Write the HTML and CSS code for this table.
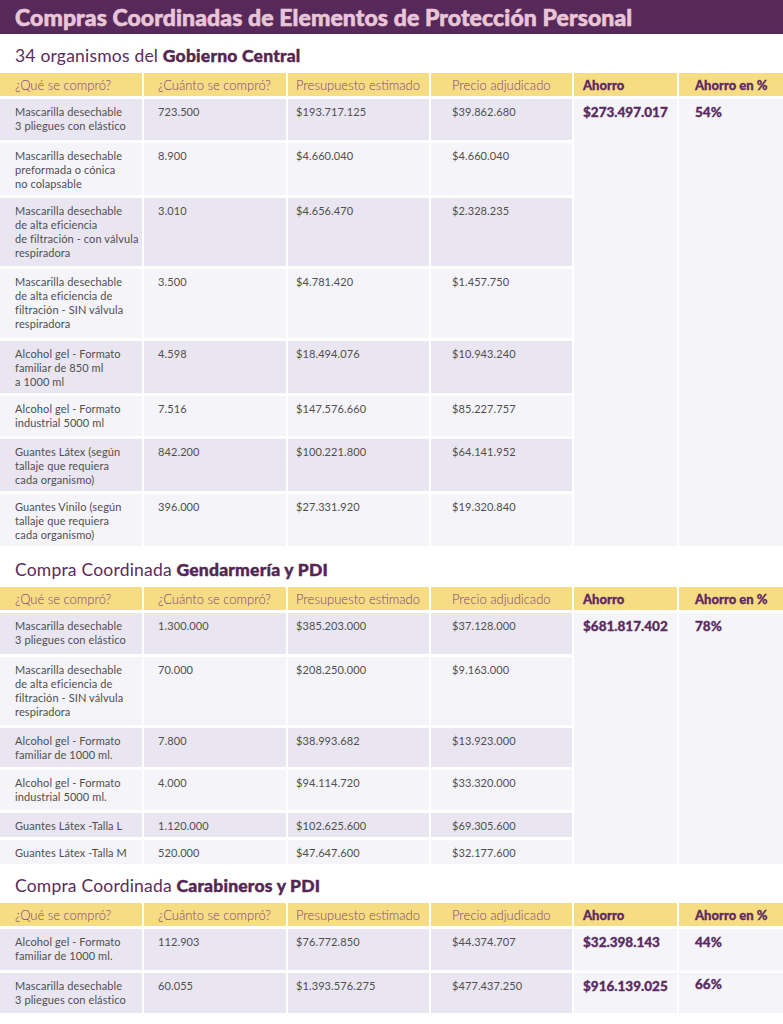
FILE: index.html
```html
<!DOCTYPE html>
<html lang="es">
<head>
<meta charset="utf-8">
<title>Compras Coordinadas de Elementos de Protección Personal</title>
<link rel="stylesheet" href="styles.css">
</head>
<body>
<header class="banner">
  <h1 class="banner-title">Compras Coordinadas de Elementos de Protección Personal</h1>
</header>

<section class="block">
  <h2 class="subtitle">34 organismos del <b>Gobierno Central</b></h2>
  <div class="grid g1">
    <div class="hd c1">¿Qué se compró?</div>
    <div class="hd c2">¿Cuánto se compró?</div>
    <div class="hd c3">Presupuesto estimado</div>
    <div class="hd c4">Precio adjudicado</div>
    <div class="hd hd-strong c5">Ahorro</div>
    <div class="hd hd-strong c6">Ahorro en %</div>
    <div class="sum c5 span">$273.497.017</div>
    <div class="sum c6 span pct">54%</div>

    <div class="cell lav c1">Mascarilla desechable<br>3 pliegues con elástico</div>
    <div class="cell lav c2">723.500</div>
    <div class="cell lav c3">$193.717.125</div>
    <div class="cell lav c4">$39.862.680</div>

    <div class="cell c1">Mascarilla desechable<br>preformada o cónica<br>no colapsable</div>
    <div class="cell c2">8.900</div>
    <div class="cell c3">$4.660.040</div>
    <div class="cell c4">$4.660.040</div>

    <div class="cell lav c1">Mascarilla desechable<br>de alta eficiencia<br>de filtración - con válvula<br>respiradora</div>
    <div class="cell lav c2">3.010</div>
    <div class="cell lav c3">$4.656.470</div>
    <div class="cell lav c4">$2.328.235</div>

    <div class="cell c1">Mascarilla desechable<br>de alta eficiencia de<br>filtración - SIN válvula<br>respiradora</div>
    <div class="cell c2">3.500</div>
    <div class="cell c3">$4.781.420</div>
    <div class="cell c4">$1.457.750</div>

    <div class="cell lav c1">Alcohol gel - Formato<br>familiar de 850 ml<br>a 1000 ml</div>
    <div class="cell lav c2">4.598</div>
    <div class="cell lav c3">$18.494.076</div>
    <div class="cell lav c4">$10.943.240</div>

    <div class="cell c1">Alcohol gel - Formato<br>industrial 5000 ml</div>
    <div class="cell c2">7.516</div>
    <div class="cell c3">$147.576.660</div>
    <div class="cell c4">$85.227.757</div>

    <div class="cell lav c1">Guantes Látex (según<br>tallaje que requiera<br>cada organismo)</div>
    <div class="cell lav c2">842.200</div>
    <div class="cell lav c3">$100.221.800</div>
    <div class="cell lav c4">$64.141.952</div>

    <div class="cell c1">Guantes Vinilo (según<br>tallaje que requiera<br>cada organismo)</div>
    <div class="cell c2">396.000</div>
    <div class="cell c3">$27.331.920</div>
    <div class="cell c4">$19.320.840</div>
  </div>
</section>

<section class="block">
  <h2 class="subtitle">Compra Coordinada <b>Gendarmería y PDI</b></h2>
  <div class="grid g2">
    <div class="hd c1">¿Qué se compró?</div>
    <div class="hd c2">¿Cuánto se compró?</div>
    <div class="hd c3">Presupuesto estimado</div>
    <div class="hd c4">Precio adjudicado</div>
    <div class="hd hd-strong c5">Ahorro</div>
    <div class="hd hd-strong c6">Ahorro en %</div>
    <div class="sum c5 span">$681.817.402</div>
    <div class="sum c6 span pct">78%</div>

    <div class="cell lav c1">Mascarilla desechable<br>3 pliegues con elástico</div>
    <div class="cell lav c2">1.300.000</div>
    <div class="cell lav c3">$385.203.000</div>
    <div class="cell lav c4">$37.128.000</div>

    <div class="cell c1">Mascarilla desechable<br>de alta eficiencia de<br>filtración - SIN válvula<br>respiradora</div>
    <div class="cell c2">70.000</div>
    <div class="cell c3">$208.250.000</div>
    <div class="cell c4">$9.163.000</div>

    <div class="cell lav c1">Alcohol gel - Formato<br>familiar de 1000 ml.</div>
    <div class="cell lav c2">7.800</div>
    <div class="cell lav c3">$38.993.682</div>
    <div class="cell lav c4">$13.923.000</div>

    <div class="cell c1">Alcohol gel - Formato<br>industrial 5000 ml.</div>
    <div class="cell c2">4.000</div>
    <div class="cell c3">$94.114.720</div>
    <div class="cell c4">$33.320.000</div>

    <div class="cell lav c1">Guantes Látex -Talla L</div>
    <div class="cell lav c2">1.120.000</div>
    <div class="cell lav c3">$102.625.600</div>
    <div class="cell lav c4">$69.305.600</div>

    <div class="cell c1">Guantes Látex -Talla M</div>
    <div class="cell c2">520.000</div>
    <div class="cell c3">$47.647.600</div>
    <div class="cell c4">$32.177.600</div>
  </div>
</section>

<section class="block">
  <h2 class="subtitle">Compra Coordinada <b>Carabineros y PDI</b></h2>
  <div class="grid g3">
    <div class="hd c1">¿Qué se compró?</div>
    <div class="hd c2">¿Cuánto se compró?</div>
    <div class="hd c3">Presupuesto estimado</div>
    <div class="hd c4">Precio adjudicado</div>
    <div class="hd hd-strong c5">Ahorro</div>
    <div class="hd hd-strong c6">Ahorro en %</div>

    <div class="cell lav c1">Alcohol gel - Formato<br>familiar de 1000 ml.</div>
    <div class="cell lav c2">112.903</div>
    <div class="cell lav c3">$76.772.850</div>
    <div class="cell lav c4">$44.374.707</div>
    <div class="sum c5">$32.398.143</div>
    <div class="sum c6 pct">44%</div>

    <div class="cell lav c1">Mascarilla desechable<br>3 pliegues con elástico</div>
    <div class="cell lav c2">60.055</div>
    <div class="cell lav c3">$1.393.576.275</div>
    <div class="cell lav c4">$477.437.250</div>
    <div class="sum c5">$916.139.025</div>
    <div class="sum c6 pct pct-high">66%</div>
  </div>
</section>
</body>
</html>
```

FILE: styles.css
```css
* {
  box-sizing: border-box;
}

html, body {
  margin: 0;
  padding: 0;
  background: #ffffff;
}

body {
  font-family: Lato, "Open Sans", "Liberation Sans", sans-serif;
  color: #4d4d4d;
  width: 783px;
  overflow: hidden;
}

.banner {
  background: #57295a;
  height: 34px;
  display: flex;
  align-items: center;
  padding-left: 15px;
}

.banner-title {
  margin: 0;
  font-size: 23px;
  font-weight: 900;
  color: #e8c6d7;
  white-space: nowrap;
  line-height: 1;
  letter-spacing: 0.1px;
  -webkit-text-stroke: 0.6px #e8c6d7;
}

.block {
  display: flex;
  flex-direction: column;
}

.subtitle {
  margin: 0;
  height: 39px;
  display: flex;
  align-items: flex-end;
  padding-left: 15px;
  padding-bottom: 7px;
  font-size: 17.5px;
  line-height: 20px;
  letter-spacing: 0.2px;
  font-weight: 400;
  color: #5c2b5e;
  white-space: pre;
}

.subtitle b {
  font-weight: 900;
  color: #542652;
  -webkit-text-stroke: 0.4px #542652;
}

.block + .block .subtitle {
  height: 41px;
}

.block:last-child .subtitle {
  height: 39px;
}

.grid {
  display: grid;
  grid-template-columns: 142px 142px 141px 141px 103px 104px;
  column-gap: 2px;
  row-gap: 3px;
}

.g1 {
  grid-template-rows: 23px 41px 52px 68px 69px 52px 40px 52px 52px;
}

.g2 {
  grid-template-rows: 23px 41px 68px 39px 40px 24px 24px;
}

.g3 {
  grid-template-rows: 23px 41px 40px;
}

.hd {
  background: #f6dc82;
  color: #823f85;
  font-size: 13px;
  font-weight: 300;
  display: flex;
  align-items: center;
  white-space: nowrap;
}

.hd-strong {
  font-weight: 900;
  color: #5e2a62;
  -webkit-text-stroke: 0.3px #5e2a62;
}

.cell {
  background: #f5f4f9;
  font-size: 11px;
  line-height: 14px;
  padding-top: 6px;
  color: #4f4f4f;
  white-space: nowrap;
  letter-spacing: 0.1px;
}

.cell.lav {
  background: #e9e6f1;
}

.sum {
  background: #f5f4f9;
  font-size: 13.5px;
  font-weight: 900;
  color: #5a2a5e;
  -webkit-text-stroke: 0.3px #5a2a5e;
  padding-top: 6px;
  line-height: 14px;
  white-space: nowrap;
}

.span.c5 {
  grid-column: 5;
  grid-row: 2 / -1;
}

.span.c6 {
  grid-column: 6;
  grid-row: 2 / -1;
}

.pct-high {
  padding-top: 4px;
}

.c1 { padding-left: 15px; }
.c2 { padding-left: 14px; }
.c3 { padding-left: 8px; }
.c4 { padding-left: 21px; }
.c5 { padding-left: 9px; }
.c6 { padding-left: 16px; }
```
